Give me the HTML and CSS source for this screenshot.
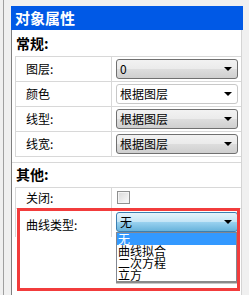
FILE: index.html
```html
<!DOCTYPE html>
<html>
<head>
<meta charset="utf-8">
<link rel="stylesheet" href="styles.css">
</head>
<body>
<div class="frame">
  <div class="panel">
    <div class="title">对象属性</div>
    <div class="content">
      <div class="group">常规:</div>
      <div class="rows">
        <div class="row"><div class="label">图层:</div><div class="value"><div class="combo btn"><span class="ctext">0</span><span class="arrow"></span></div></div></div>
        <div class="row"><div class="label">颜色</div><div class="value"><div class="combo plain"><span class="ctext">根据图层</span><span class="arrow"></span></div></div></div>
        <div class="row"><div class="label">线型:</div><div class="value"><div class="combo btn"><span class="ctext">根据图层</span><span class="arrow"></span></div></div></div>
        <div class="row"><div class="label">线宽:</div><div class="value"><div class="combo btn"><span class="ctext">根据图层</span><span class="arrow"></span></div></div></div>
      </div>
      <div class="group sep">其他:</div>
      <div class="rows">
        <div class="row short"><div class="label">关闭:</div><div class="value"><span class="check"></span></div></div>
        <div class="row open"><div class="label">曲线类型:</div><div class="value">
          <div class="combo focus"><span class="ctext">无</span><span class="arrow"></span></div>
          <div class="list">
            <div class="item sel">无</div>
            <div class="item">曲线拟合</div>
            <div class="item">二次方程</div>
            <div class="item">立方</div>
          </div>
        </div></div>
      </div>
    </div>
  </div>
  <div class="highlight"></div>
</div>
</body>
</html>
```

FILE: styles.css
```css
html, body {
  margin: 0;
  padding: 0;
  width: 249px;
  height: 295px;
  overflow: hidden;
  background: #f0f0f0;
  font-family: "Noto Sans CJK SC", "Liberation Sans", sans-serif;
  font-size: 12px;
  color: #000;
}
.frame {
  position: relative;
  margin-left: 3px;
  border-left: 1px solid #a0a0a0;
  padding: 6px 0 0 7px;
  height: 289px;
}
.panel {
  width: 232px;
}
.title {
  height: 24px;
  line-height: 24px;
  background: #0059e6;
  color: #fff;
  font-weight: bold;
  font-size: 15px;
  padding-left: 4px;
}
.content {
  width: 229px;
  height: 265px;
  background: #fff;
  border-left: 1px solid #7f7f7f;
  border-right: 1px solid #d4d4d4;
}
.group {
  height: 26px;
  line-height: 26px;
  padding-left: 4px;
  font-weight: bold;
  font-size: 14px;
}
.group.sep {
  margin-top: 5px;
  border-top: 1px solid #d8d8d8;
  height: 24px;
  line-height: 22px;
}
.rows {
  margin-left: 3px;
  border-left: 1px solid #d8d8d8;
  border-top: 1px solid #d8d8d8;
}
.row {
  display: flex;
  height: 24px;
  border-bottom: 1px solid #d8d8d8;
}
.row.short {
  height: 20px;
}
.row.open {
  height: 28px;
  border-bottom: none;
}
.label {
  width: 85px;
  padding-left: 10px;
  border-right: 1px solid #d8d8d8;
  line-height: 24px;
}
.row.short .label {
  line-height: 20px;
}
.row.open .label {
  padding-top: 4px;
  line-height: 24px;
}
.value {
  position: relative;
  flex: 1;
  padding-left: 4px;
  padding-top: 2px;
}
.row.open .value {
  padding-top: 3px;
}
.combo {
  position: relative;
  box-sizing: border-box;
  width: 122px;
  height: 20px;
  border: 1px solid #707070;
  border-radius: 3px;
  line-height: 17px;
  padding-left: 3px;
}
.combo.btn {
  background: linear-gradient(#f2f2f2 0%, #ebebeb 48%, #dddddd 52%, #cfcfcf 100%);
}
.combo.plain {
  background: #fff;
  border-color: #c8c8c8;
}
.combo.focus {
  border-color: #3c7fb1;
  background: linear-gradient(#e5f4fc 0%, #c4e5f6 48%, #98d1ef 52%, #68b3db 100%);
}
.arrow {
  position: absolute;
  right: 5px;
  top: 7px;
  width: 0;
  height: 0;
  border-left: 4px solid transparent;
  border-right: 4px solid transparent;
  border-top: 4px solid #000;
}
.check {
  display: block;
  margin-top: 1px;
  margin-left: 1px;
  box-sizing: border-box;
  width: 13px;
  height: 13px;
  border: 1px solid #8e8f8f;
  background: linear-gradient(135deg, #d8d8d8, #fbfbfb);
  box-shadow: inset 0 0 0 1px #f4f4f4;
}
.list {
  position: absolute;
  left: 4px;
  top: 23px;
  width: 121px;
  box-sizing: border-box;
  background: #fff;
  border: 1px solid #828790;
  border-bottom: 2px solid #8a8a8a;
  box-shadow: 0 1px 0 #c8c8c8;
  z-index: 2;
}
.item {
  height: 12px;
  line-height: 12px;
  padding-left: 1px;
  white-space: nowrap;
}
.item.sel {
  background: #3399ff;
  color: #fff;
}
.highlight {
  position: absolute;
  left: 13px;
  top: 208px;
  width: 217px;
  height: 77px;
  border: 3px solid #f23c3c;
  z-index: 3;
}
```
